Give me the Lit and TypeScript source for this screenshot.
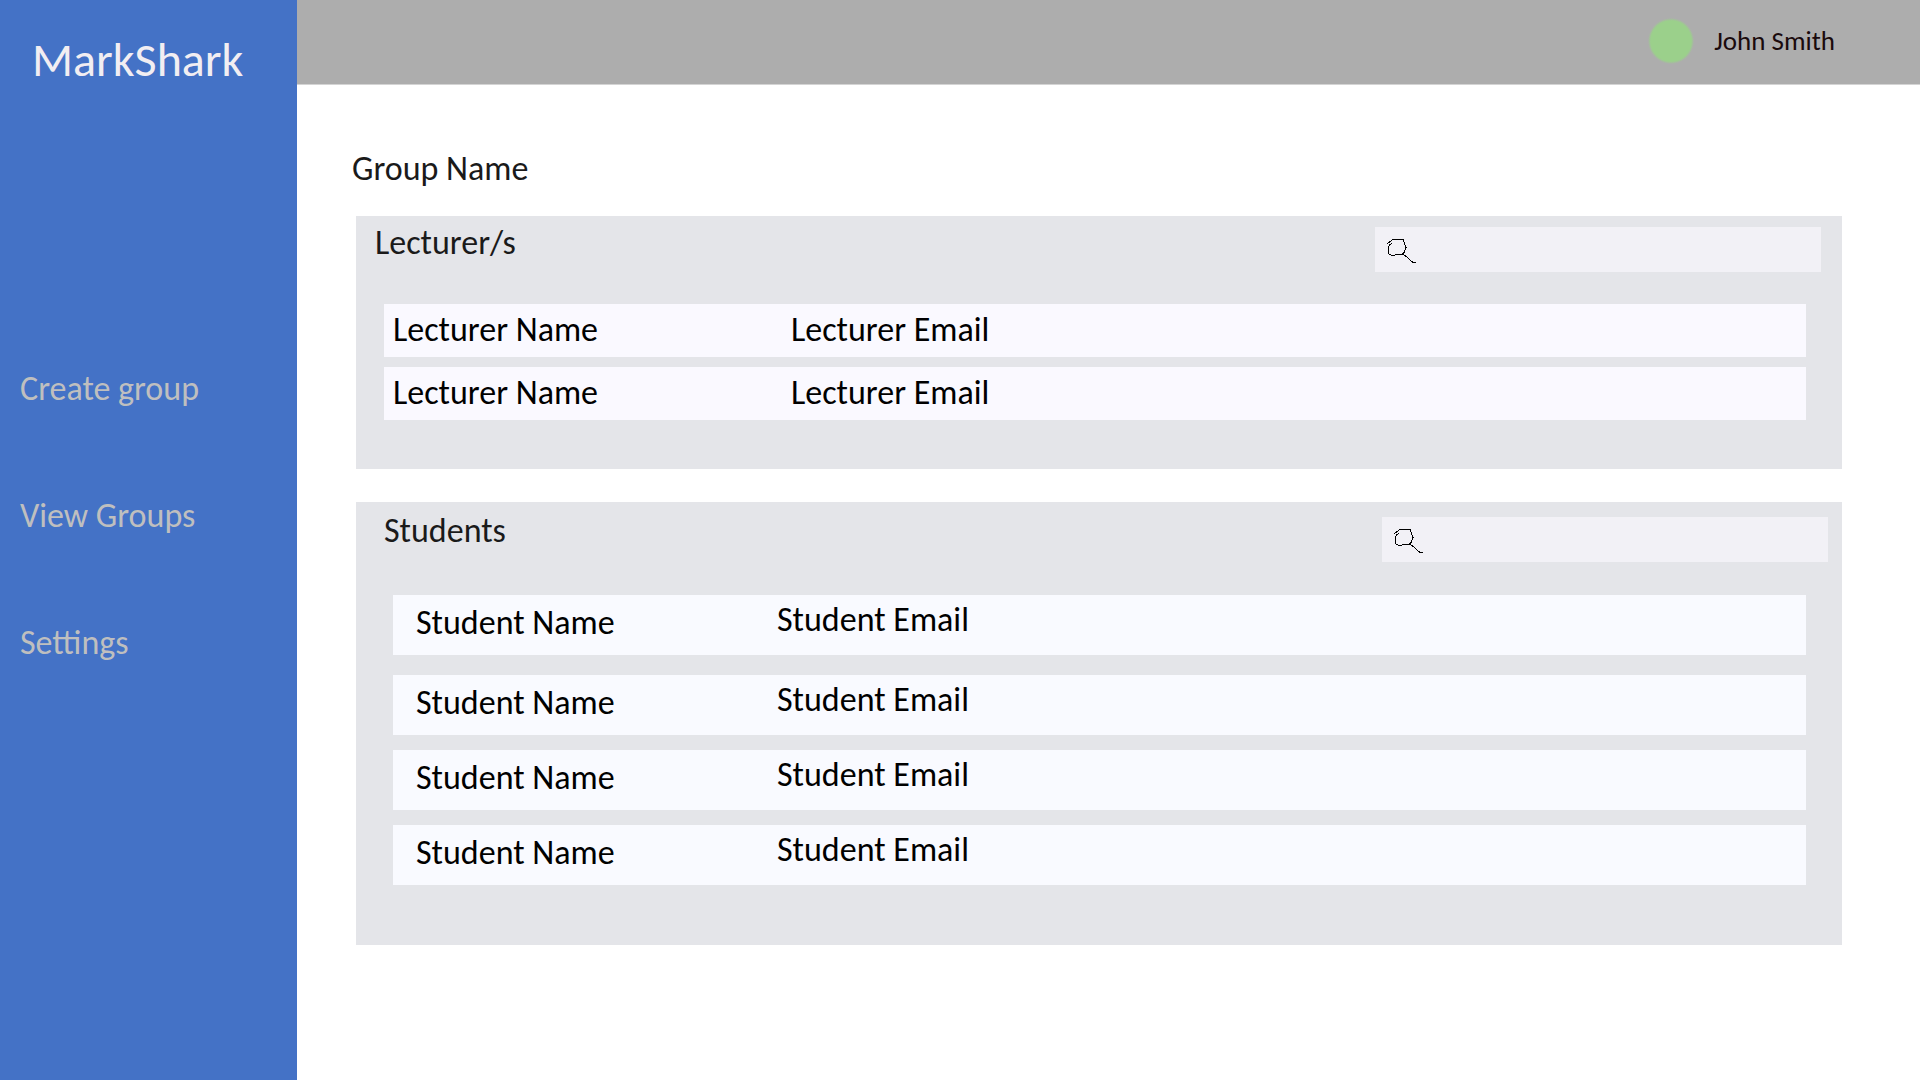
import { LitElement, html, css } from "lit";
import { customElement, property } from "lit/decorators.js";

interface Person {
  name: string;
  email: string;
}

const NAV_ITEMS = ["Create group", "View Groups", "Settings"];

const LECTURERS: Person[] = Array.from({ length: 2 }, () => ({
  name: "Lecturer Name",
  email: "Lecturer Email",
}));

const STUDENTS: Person[] = Array.from({ length: 4 }, () => ({
  name: "Student Name",
  email: "Student Email",
}));

@customElement("member-panel")
export class MemberPanel extends LitElement {
  @property() heading = "";
  @property({ reflect: true }) kind: "lecturers" | "students" = "lecturers";
  @property({ attribute: false }) people: Person[] = [];

  static styles = css`
    :host {
      display: block;
      background: #e4e5e9;
      --row-color: #faf9ff;
    }
    :host([kind="students"]) {
      --row-color: #f9faff;
    }
    .panel {
      display: flex;
      flex-direction: column;
      gap: 32px;
      padding: 9px 36px 49px 28px;
    }
    .head {
      display: flex;
      justify-content: space-between;
      align-items: flex-start;
      margin: 0 -15px 0 -9px;
    }
    .title {
      margin: 0;
      font-size: 34px;
      line-height: 36px;
      font-weight: 400;
      color: #1a1a1a;
    }
    .search {
      display: flex;
      align-items: flex-start;
      width: 446px;
      height: 45px;
      box-sizing: border-box;
      margin-top: 2px;
      padding: 11px 10px;
      gap: 8px;
      background: #f2f1f6;
    }
    .icon {
      flex: none;
      width: 32px;
      height: 26px;
      fill: none;
      stroke: #000;
      shape-rendering: crispEdges;
    }
    .field {
      flex: 1;
      min-width: 0;
      height: 24px;
      border: 0;
      padding: 0;
      background: transparent;
      font: inherit;
      font-size: 20px;
      outline: none;
    }
    .table,
    .body {
      display: grid;
    }
    .body {
      gap: 10px;
    }
    .row {
      display: grid;
      grid-template-columns: 398px 1fr;
      align-items: center;
      height: 53px;
      box-sizing: border-box;
      padding: 0 0 1px 9px;
      background: var(--row-color);
    }
    .cell {
      padding: 0;
      font-size: 34px;
      line-height: 36px;
      font-weight: 400;
      text-align: left;
      color: #000;
    }
    .students {
      gap: 33px;
      padding: 11px 36px 60px 37px;
    }
    .students .head {
      margin: 0 -22px 0 -9px;
    }
    .students .search {
      margin-top: 4px;
    }
    .students .body {
      gap: 15px;
    }
    .students .row {
      grid-template-columns: 361px 1fr;
      height: 60px;
      padding: 0 0 4px 23px;
    }
    .students .row:first-child {
      margin-bottom: 5px;
    }
    .students .email {
      padding-bottom: 6px;
    }
  `;

  render() {
    return html`
      <section class="panel ${this.kind}" aria-labelledby="title">
        <div class="head">
          <h2 class="title" id="title">${this.heading}</h2>
          <label class="search">
            <svg class="icon" viewBox="0 0 32 26" aria-hidden="true">
              <path
                d="M1.5 6.5 2.5 5.5 4 4.5 8 1.5H18L19 4 21 9.5 19.5 13 18.5 16 10 17H6L3.5 15.5V8.5L5 6.5 7.5 5.5"
              />
              <path d="M17 15.5 19 17 22 19 24 21 28 24.5H31" />
            </svg>
            <input class="field" type="search" aria-label="Search ${this.kind}" />
          </label>
        </div>
        <table class="table" role="table" aria-labelledby="title">
          <tbody class="body" role="rowgroup">
            ${this.people.map(
              (p) => html`
                <tr class="row" role="row">
                  <th class="cell" scope="row" role="rowheader">${p.name}</th>
                  <td class="cell email" role="cell">${p.email}</td>
                </tr>
              `
            )}
          </tbody>
        </table>
      </section>
    `;
  }
}

@customElement("app-root")
export class AppRoot extends LitElement {
  static styles = css`
    :host {
      display: flex;
      min-height: 100vh;
      background: #fff;
      font-family: Carlito, Calibri, Lato, "Open Sans", sans-serif;
    }
    .sidebar {
      flex: none;
      width: 297px;
      background: #4472c6;
    }
    .brand {
      margin: 0;
      padding: 30px 0 0 32px;
      font-size: 48px;
      line-height: 60px;
      font-weight: 400;
      color: #f2eef2;
    }
    .nav {
      display: flex;
      flex-direction: column;
      align-items: flex-start;
      gap: 91px;
      padding: 281px 0 0 20px;
    }
    .link {
      font-size: 34px;
      line-height: 36px;
      color: #bfbfbf;
      text-decoration: none;
    }
    .page {
      flex: 1;
      min-width: 0;
    }
    .topbar {
      display: flex;
      justify-content: flex-end;
      align-items: center;
      gap: 20px;
      height: 84px;
      box-sizing: border-box;
      padding: 0 85px 2px 0;
      background: #adadad;
      box-shadow: 0 1px #d4d4d4;
    }
    .avatar {
      width: 46px;
      height: 46px;
      background: radial-gradient(circle closest-side, #9bd08b 88%, transparent);
    }
    .user {
      font-size: 27px;
      line-height: 30px;
      color: #1a0a0c;
    }
    .content {
      display: flex;
      flex-direction: column;
      padding: 67px 78px 67px 59px;
    }
    .group {
      margin: 0 0 29px -4px;
      font-size: 34px;
      line-height: 36px;
      font-weight: 400;
      color: #1a1a1a;
    }
    .panels {
      display: grid;
      gap: 33px;
    }
  `;

  render() {
    return html`
      <aside class="sidebar">
        <p class="brand">MarkShark</p>
        <nav class="nav" aria-label="Main">
          ${NAV_ITEMS.map((item) => html`<a class="link" href="#">${item}</a>`)}
        </nav>
      </aside>
      <div class="page">
        <header class="topbar">
          <span class="avatar"></span>
          <span class="user">John Smith</span>
        </header>
        <main class="content">
          <h1 class="group">Group Name</h1>
          <div class="panels">
            <member-panel heading="Lecturer/s" kind="lecturers" .people=${LECTURERS}></member-panel>
            <member-panel heading="Students" kind="students" .people=${STUDENTS}></member-panel>
          </div>
        </main>
      </div>
    `;
  }
}
